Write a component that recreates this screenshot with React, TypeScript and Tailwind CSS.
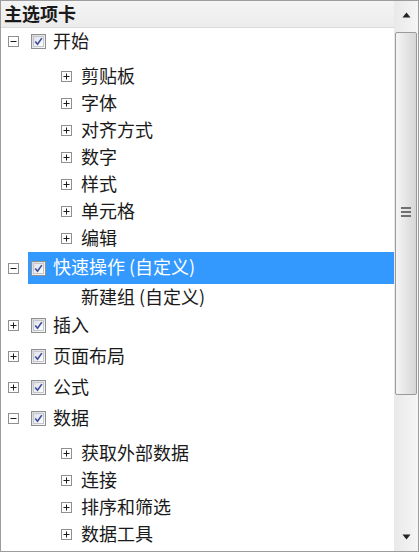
import React from 'react';

type TopProps = {
  label: string;
  open?: boolean;
  selected?: boolean;
  h: string;
};

const Expander: React.FC<{ open?: boolean }> = ({ open }) => (
  <span className="w-[11px] h-[11px] shrink-0 border border-[#8f8f8f] bg-white flex items-center justify-center">
    <svg width="9" height="9" viewBox="0 0 9 9">
      <rect x="1.5" y="4" width="6" height="1" fill="#1a1a1a" />
      {!open && <rect x="4" y="1.5" width="1" height="6" fill="#1a1a1a" />}
    </svg>
  </span>
);

const Check = () => (
  <span className="w-[15px] h-[15px] shrink-0 border border-[#8e8f8f] bg-gradient-to-br from-[#d6d8dc] to-[#fbfbfb] p-[1px]">
    <span className="w-full h-full border border-[#c4c6cc] bg-gradient-to-br from-[#e0e2e8] to-[#ffffff] flex items-center justify-center">
      <svg width="11" height="11" viewBox="0 0 11 11">
        <path d="M1.5 5.6 L4.3 8.8 L9.6 1.4" fill="none" stroke="#3a4d9e" strokeWidth="2" />
      </svg>
    </span>
  </span>
);

const TopRow: React.FC<TopProps> = ({ label, open, selected, h }) => (
  <div className={`flex items-center pl-[7px] ${h}`}>
    <Expander open={open} />
    <div
      className={`ml-[9px] flex-1 h-full flex items-center pl-[3px] ${
        selected ? 'bg-[#3399ff] text-white' : 'text-[#1a1a1a]'
      }`}
    >
      <Check />
      <span className="ml-[7px] mb-[4px] leading-none">{label}</span>
    </div>
  </div>
);

const ChildRow: React.FC<{ label: string }> = ({ label }) => (
  <div className="flex items-center pl-[60px] h-[27px] text-[#1a1a1a]">
    <Expander />
    <span className="ml-[9px] mb-[4px] leading-none">{label}</span>
  </div>
);

const Arrow: React.FC<{ up?: boolean }> = ({ up }) => (
  <svg width="9" height="6" viewBox="0 0 9 6">
    {up ? <path d="M0.5 5.5 L4.5 0.5 L8.5 5.5 Z" fill="#222" /> : <path d="M0.5 0.5 L4.5 5.5 L8.5 0.5 Z" fill="#222" />}
  </svg>
);

export default function App() {
  return (
    <div className="w-[419px] h-[552px] border border-[#9c9c9c] bg-white flex font-['Noto_Sans_CJK_SC',sans-serif] text-[18px] overflow-hidden">
      <div className="flex-1 flex flex-col">
        <div className="h-[27px] shrink-0 border-b border-[#dadada] bg-gradient-to-b from-[#f4f4f4] to-[#ececec] flex items-center pl-[3px]">
          <span className="font-bold leading-none mb-[2px] text-[#1a1a1a]">主选项卡</span>
        </div>

        <TopRow label="开始" open h="h-[27px]" />
        <div className="pt-[8px]">
          {['剪贴板', '字体', '对齐方式', '数字', '样式', '单元格', '编辑'].map((c) => (
            <ChildRow key={c} label={c} />
          ))}
        </div>

        <TopRow label="快速操作 (自定义)" open selected h="h-[32px]" />
        <div className="h-[26px] flex items-center pl-[80px] text-[#1a1a1a]">
          <span className="leading-none mb-[2px]">新建组 (自定义)</span>
        </div>

        <TopRow label="插入" h="h-[31px]" />
        <TopRow label="页面布局" h="h-[31px]" />
        <TopRow label="公式" h="h-[31px]" />
        <TopRow label="数据" open h="h-[31px]" />
        <div className="pt-[6px]">
          {['获取外部数据', '连接', '排序和筛选', '数据工具'].map((c) => (
            <ChildRow key={c} label={c} />
          ))}
        </div>
      </div>

      {/* scrollbar */}
      <div className="w-[24px] shrink-0 flex flex-col bg-gradient-to-r from-[#e9e9e9] to-[#f5f5f5]">
        <div className="h-[28px] flex items-center justify-center">
          <Arrow up />
        </div>
        <div className="flex-1 pt-[3px]">
          <div className="h-[363px] mx-[1px] border border-[#9a9a9a] rounded-[2px] bg-gradient-to-r from-[#f5f5f5] to-[#d6d6d6] flex items-center justify-center">
            <div className="flex flex-col gap-[2px] mt-[-4px]">
              <span className="w-[10px] h-[2px] bg-[#707070]" />
              <span className="w-[10px] h-[2px] bg-[#707070]" />
              <span className="w-[10px] h-[2px] bg-[#707070]" />
            </div>
          </div>
        </div>
        <div className="h-[28px] flex items-center justify-center">
          <Arrow />
        </div>
      </div>
    </div>
  );
}
